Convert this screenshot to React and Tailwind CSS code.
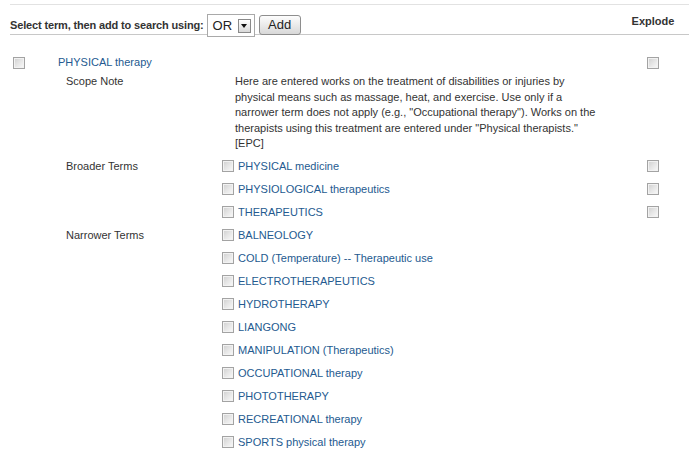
import React from "react";

const Box = () => (
  <span className="inline-block w-[12px] h-[12px] shrink-0 border border-[#a3a3a3] bg-linear-to-br from-[#cfcfcf] via-[#e6e6e6] to-[#fafafa] shadow-[inset_0_0_0_1px_#f2f2f2]" />
);

const broader = [
  "PHYSICAL medicine",
  "PHYSIOLOGICAL therapeutics",
  "THERAPEUTICS",
];

const narrower = [
  "BALNEOLOGY",
  "COLD (Temperature) -- Therapeutic use",
  "ELECTROTHERAPEUTICS",
  "HYDROTHERAPY",
  "LIANGONG",
  "MANIPULATION (Therapeutics)",
  "OCCUPATIONAL therapy",
  "PHOTOTHERAPY",
  "RECREATIONAL therapy",
  "SPORTS physical therapy",
];

function TermRow({ label, explode }) {
  return (
    <div className="flex items-center h-[23px]">
      <Box />
      <a className="ml-[4px] text-[#245a90] leading-[15px] whitespace-nowrap">{label}</a>
      {explode && (
        <div className="ml-auto w-[60px] flex justify-center">
          <Box />
        </div>
      )}
    </div>
  );
}

function Group({ title, items, explode }) {
  return (
    <div className="flex">
      <div className="w-[222px] pl-[66px] h-[23px] flex items-center text-[#333] shrink-0">
        {title}
      </div>
      <div className="flex-1 flex flex-col">
        {items.map((t) => (
          <TermRow key={t} label={t} explode={explode} />
        ))}
      </div>
    </div>
  );
}

export default function App() {
  return (
    <div
      className="w-[689px] h-[453px] bg-white overflow-hidden text-[11px] text-[#333] pt-[4px]"
      style={{ fontFamily: '"Liberation Sans", Arial, sans-serif' }}
    >
      {/* header */}
      <div className="ml-[10px] h-[31px] border-t border-t-[#e2e2e2] border-b border-b-[#c8c8c8] flex justify-between pr-[6px]">
        <div className="flex items-center h-[23px] mt-[9px]">
          <span className="font-bold leading-[15px] whitespace-nowrap tracking-[-0.15px]">
            Select term, then add to search using:
          </span>
          <div className="ml-[3px] w-[48px] h-[23px] border border-[#a9a9a9] bg-white flex items-center pl-[5px] text-[13px] text-[#222]">
            <span>OR</span>
            <span className="ml-auto mr-[3px] w-[13px] h-[14px] border border-[#8a8a8a] bg-linear-to-b from-[#ffffff] to-[#d9d9d9] flex items-center justify-center">
              <span className="block w-0 h-0 border-l-[3.5px] border-r-[3.5px] border-t-[4px] border-l-transparent border-r-transparent border-t-[#111]" />
            </span>
          </div>
          <button className="ml-[4px] -mt-[2px] w-[42px] h-[20px] border border-[#8e8e8e] rounded-[3px] bg-linear-to-b from-[#fdfdfd] to-[#d8d8d8] text-[13px] text-[#222] leading-[18px]">
            Add
          </button>
        </div>
        <div className="w-[60px] text-center font-bold leading-[15px] mt-[9px]">
          Explode
        </div>
      </div>

      {/* body */}
      <div className="pt-[16px] pr-[6px]">
        <div className="flex items-center h-[23px]">
          <div className="w-[58px] pl-[13px] flex">
            <Box />
          </div>
          <a className="text-[#245a90] leading-[15px]">PHYSICAL therapy</a>
          <div className="ml-auto w-[60px] flex justify-center">
            <Box />
          </div>
        </div>

        <div className="flex leading-[15.5px]">
          <div className="w-[222px] pl-[66px] shrink-0">Scope Note</div>
          <p className="ml-[13px] w-[362px]">
            Here are entered works on the treatment of disabilities or injuries by
            physical means such as massage, heat, and exercise. Use only if a
            narrower term does not apply (e.g., "Occupational therapy"). Works on the
            therapists using this treatment are entered under "Physical therapists."
            [EPC]
          </p>
        </div>

        <div className="mt-[3px]">
          <Group title="Broader Terms" items={broader} explode />
          <Group title="Narrower Terms" items={narrower} />
        </div>
      </div>
    </div>
  );
}
